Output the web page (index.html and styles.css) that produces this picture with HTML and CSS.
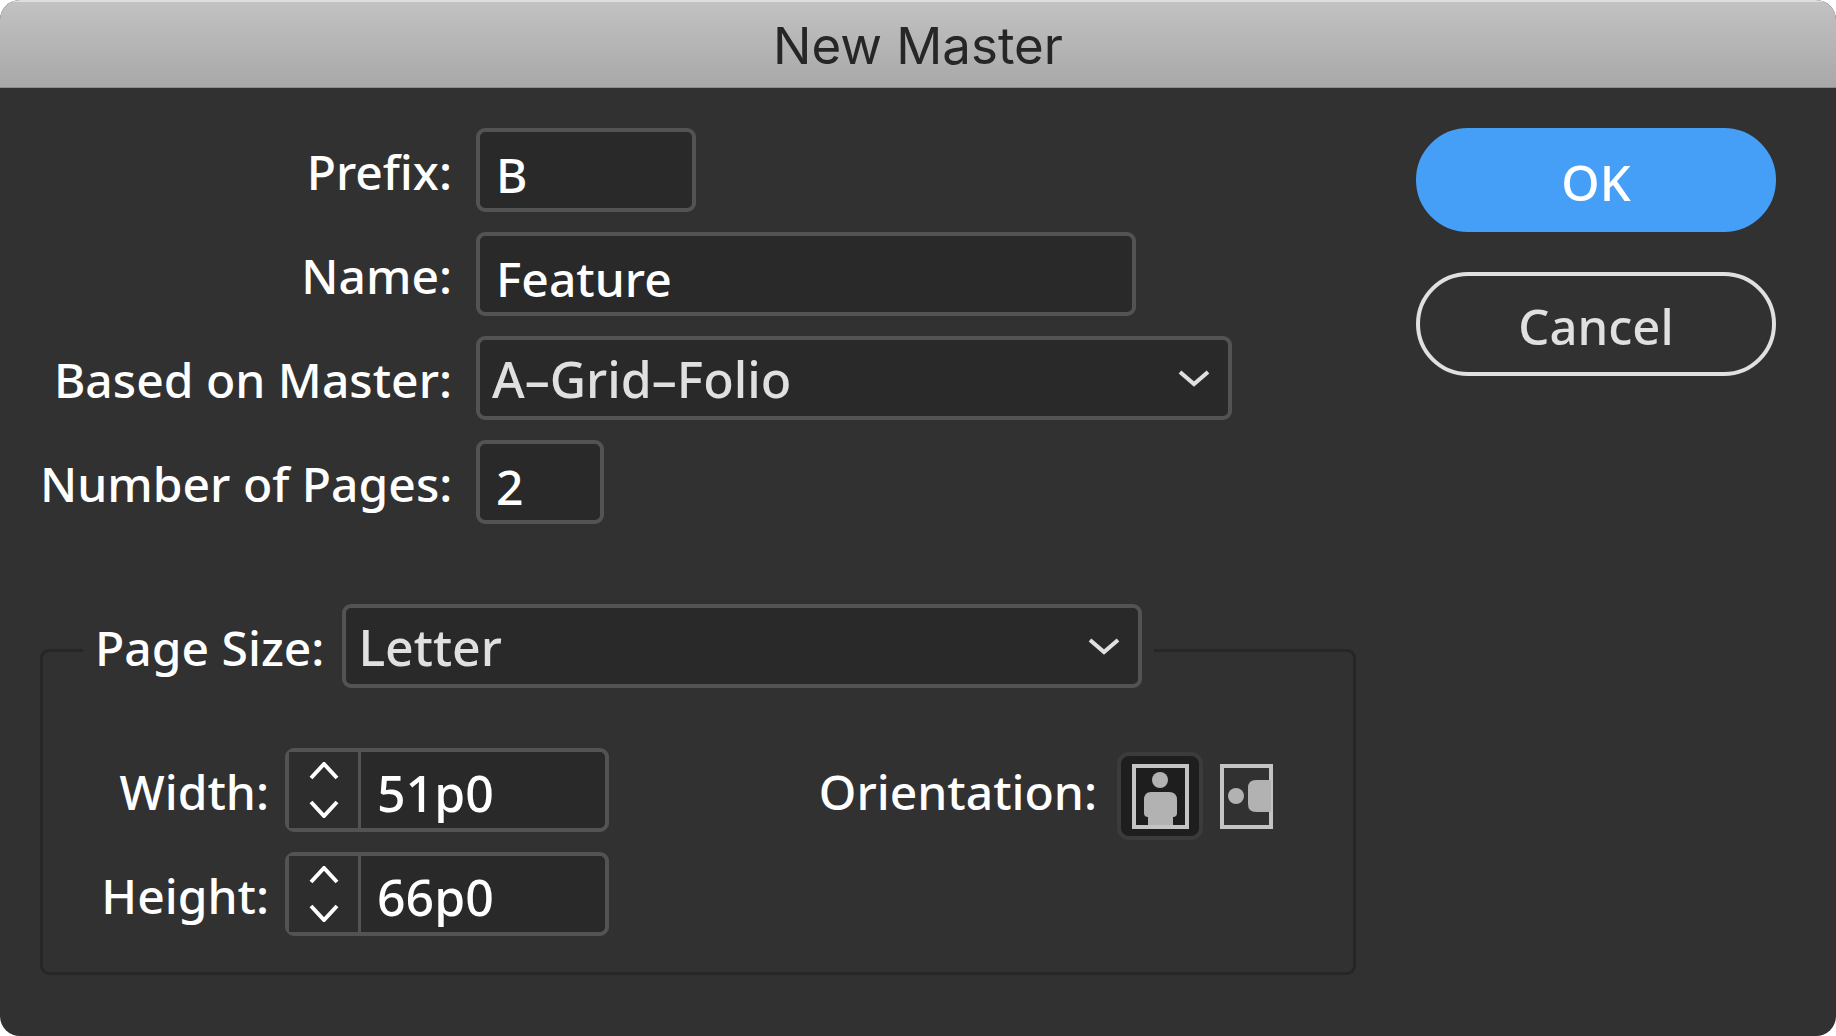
FILE: index.html
```html
<!DOCTYPE html>
<html lang="en">
<head>
<meta charset="utf-8">
<meta name="viewport" content="width=device-width, initial-scale=1">
<title>New Master</title>
<link rel="stylesheet" href="styles.css">
</head>
<body>
<main class="dialog">
  <header class="titlebar"><h1 class="title">New Master</h1></header>
  <form class="content">
    <div class="settings">
      <div class="fields">
        <label class="label" for="prefix">Prefix:</label>
        <input class="box field-prefix" id="prefix" type="text" value="B">
        <label class="label" for="name">Name:</label>
        <input class="box field-name" id="name" type="text" value="Feature">
        <label class="label" for="based-on">Based on Master:</label>
        <div class="dropdown field-based">
          <select class="box select" id="based-on"><option>A–Grid–Folio</option></select>
          <svg class="chevron" viewBox="0 0 32 18" aria-hidden="true"><path d="M2 3l14 12L30 3"/></svg>
        </div>
        <label class="label" for="pages">Number of Pages:</label>
        <input class="box field-pages" id="pages" type="text" value="2">
      </div>

      <fieldset class="group">
        <legend class="legend">
          <span class="legend-row">
            <label class="label" for="page-size">Page Size:</label>
            <span class="dropdown field-size">
              <select class="box select" id="page-size"><option>Letter</option></select>
              <svg class="chevron" viewBox="0 0 32 18" aria-hidden="true"><path d="M2 3l14 12L30 3"/></svg>
            </span>
          </span>
        </legend>
        <div class="group-body">
          <div class="dimensions">
            <label class="label" for="width">Width:</label>
            <div class="box stepper">
              <div class="steps">
                <button class="step" type="button" aria-label="Increase width"><svg class="arrow" viewBox="0 0 32 18"><path d="M3 16L16 2l13 14"/></svg></button>
                <button class="step" type="button" aria-label="Decrease width"><svg class="arrow" viewBox="0 0 32 18"><path d="M3 2l13 14L29 2"/></svg></button>
              </div>
              <input class="stepper-input" id="width" type="text" value="51p0">
            </div>
            <label class="label" for="height">Height:</label>
            <div class="box stepper">
              <div class="steps">
                <button class="step" type="button" aria-label="Increase height"><svg class="arrow" viewBox="0 0 32 18"><path d="M3 16L16 2l13 14"/></svg></button>
                <button class="step" type="button" aria-label="Decrease height"><svg class="arrow" viewBox="0 0 32 18"><path d="M3 2l13 14L29 2"/></svg></button>
              </div>
              <input class="stepper-input" id="height" type="text" value="66p0">
            </div>
          </div>
          <div class="orientation" role="radiogroup" aria-labelledby="orientation-label">
            <span class="label orientation-label" id="orientation-label">Orientation:</span>
            <div class="choices">
              <label class="choice">
                <input class="radio" type="radio" name="orientation" aria-label="Portrait" checked>
                <svg width="57" height="65" viewBox="0 0 57 65" aria-hidden="true">
                  <rect x="2" y="2" width="53" height="61" fill="none" stroke="#c4c4c4" stroke-width="4"/>
                  <circle cx="28" cy="16" r="8" fill="#b2b2b2"/>
                  <path d="M19 28h18q8 0 8 8v13q0 4-4 4v8H16v-8q-4 0-4-4V36q0-8 7-8z" fill="#b2b2b2"/>
                </svg>
              </label>
              <label class="choice">
                <input class="radio" type="radio" name="orientation" aria-label="Landscape">
                <svg width="53" height="65" viewBox="0 0 53 65" aria-hidden="true">
                  <rect x="2" y="2" width="49" height="61" fill="none" stroke="#c4c4c4" stroke-width="4"/>
                  <circle cx="16" cy="32" r="8" fill="#b2b2b2"/>
                  <path d="M36 16h15v32H36q-8 0-8-8V24q0-8 8-8z" fill="#b2b2b2"/>
                </svg>
              </label>
            </div>
          </div>
        </div>
      </fieldset>
    </div>
    <div class="actions">
      <button class="button primary" type="submit">OK</button>
      <button class="button" type="button">Cancel</button>
    </div>
  </form>
</main>
</body>
</html>
```
FILE: styles.css
```css
* {
  box-sizing: border-box;
}

body {
  margin: 0;
  background: #fff;
  color: #fff;
  font: 500 48px/60px "Noto Sans", "Open Sans", sans-serif;
}

input,
select,
button {
  margin: 0;
  padding: 0;
  font: inherit;
  color: inherit;
}

.dialog {
  display: flex;
  flex-direction: column;
  min-height: 100vh;
  border-radius: 20px;
  overflow: hidden;
  background: #313131;
}

.titlebar {
  height: 88px;
  padding-top: 14px;
  border-top: 2px solid #dedede;
  border-bottom: 1px solid #8c8c8c;
  background: linear-gradient(#c2c2c2, #a8a8a8);
}

.title {
  margin: 0;
  color: #262626;
  font: 400 51px/60px Inter, sans-serif;
  text-align: center;
}

.content {
  display: flex;
  align-items: flex-start;
  gap: 60px;
  padding: 40px 60px 40px 40px;
}

.settings {
  flex: 1;
  min-width: 0;
}

.fields,
.dimensions {
  display: grid;
  align-items: center;
  row-gap: 20px;
}

.fields {
  grid-template-columns: 412px 1fr;
  column-gap: 24px;
}

.label {
  padding-top: 4px;
  text-align: right;
  white-space: nowrap;
}

.box {
  height: 84px;
  border: 4px solid #535353;
  border-radius: 9px;
  background: #292929;
}

input.box {
  padding: 8px 16px 0;
}

.dropdown {
  display: grid;
  align-items: center;
}

.dropdown > * {
  grid-area: 1 / 1;
}

.select {
  width: 100%;
  padding: 2px 80px 0 12px;
  appearance: none;
  color: #e0e0e0;
  font-size: 50px;
}

.chevron {
  width: 32px;
  height: 18px;
  margin-right: 22px;
  justify-self: end;
  fill: none;
  stroke: #e0e0e0;
  stroke-width: 4;
  pointer-events: none;
}

.field-prefix { width: 220px; }
.field-name { width: 660px; }
.field-based { width: 756px; }
.field-pages { width: 128px; }
.field-size { width: 800px; }

.group {
  min-width: 0;
  margin: 80px 0 0;
  padding: 52px 64px 36px 40px;
  border: 3px solid #262626;
  border-radius: 9px;
}

.legend {
  padding: 0 12px 8px;
}

.legend-row {
  display: flex;
  align-items: center;
  gap: 18px;
}

.group-body {
  display: flex;
  align-items: flex-start;
  justify-content: space-between;
}

.dimensions {
  grid-template-columns: 186px 324px;
  column-gap: 16px;
}

.stepper {
  display: flex;
}

.steps {
  display: flex;
  flex-direction: column;
  width: 72px;
  border-right: 3px solid #535353;
  background: #2d2d2d;
}

.step {
  display: flex;
  flex: 1;
  align-items: center;
  justify-content: center;
  border: 0;
  background: none;
}

.arrow {
  width: 32px;
  height: 18px;
  fill: none;
  stroke: #fff;
  stroke-width: 4;
}

.stepper-input {
  flex: 1;
  min-width: 0;
  padding: 6px 16px 0;
  border: 0;
  background: none;
  font-size: 50px;
}

.orientation {
  display: flex;
  align-items: flex-start;
  gap: 20px;
}

.orientation-label {
  padding-top: 14px;
}

.choices {
  display: flex;
  align-items: center;
  margin-top: 4px;
}

.choice {
  display: grid;
  place-items: center;
  width: 86px;
  height: 88px;
  border: 4px solid transparent;
  border-radius: 12px;
}

.choice > * {
  grid-area: 1 / 1;
}

.choice:has(:checked) {
  border-color: #3b3b3b;
  background: #1e1e1e;
}

.radio {
  width: 100%;
  height: 100%;
  appearance: none;
}

.actions {
  display: flex;
  flex-direction: column;
  gap: 40px;
  width: 360px;
}

.button {
  height: 104px;
  padding-top: 4px;
  border: 4px solid #e0e0e0;
  border-radius: 52px;
  background: none;
  color: #e0e0e0;
  font-size: 49px;
}

.primary {
  border-color: #469ff7;
  background: #469ff7;
  color: #fff;
}
```
